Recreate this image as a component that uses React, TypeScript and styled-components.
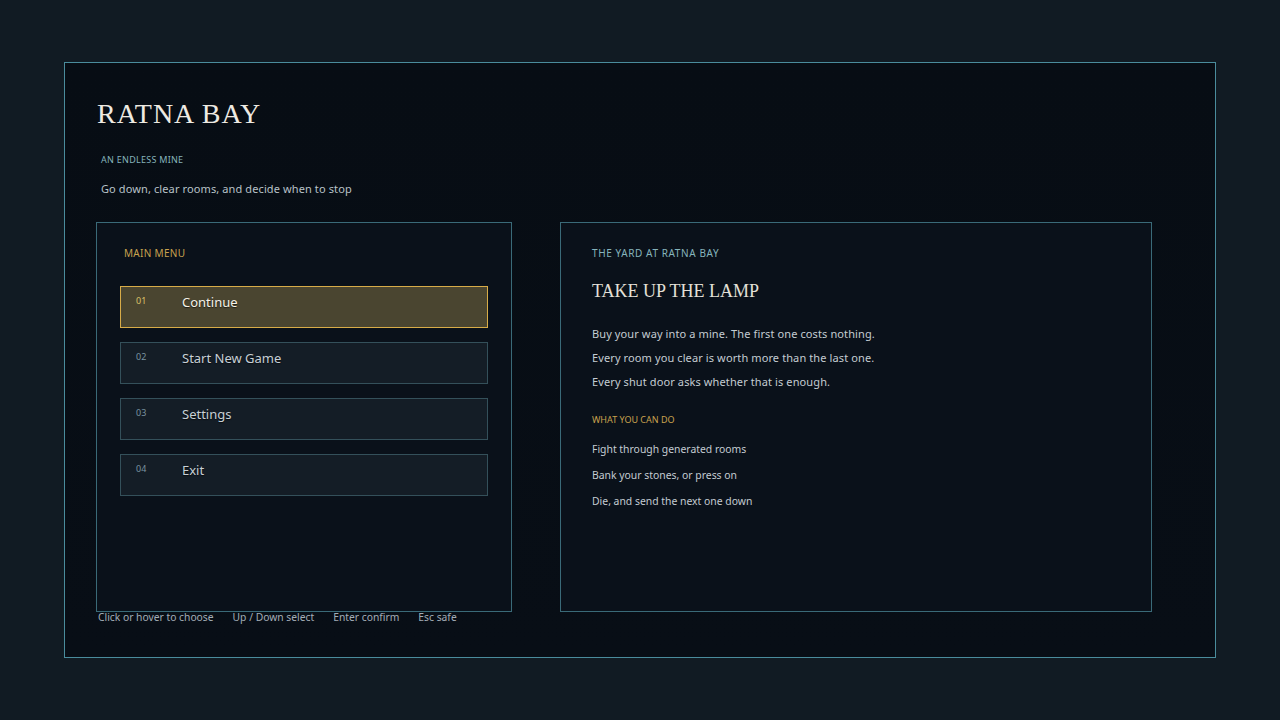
import React from 'react'
import styled, { createGlobalStyle } from 'styled-components'

const GlobalStyle = createGlobalStyle`
  html, body {
    margin: 0;
    padding: 0;
    background: #111b23;
  }
  body {
    font-family: 'Noto Sans', 'Open Sans', sans-serif;
    color: #c4ccd2;
  }
`

const gold = '#c9a24e'
const teal = '#86b4bc'

const Screen = styled.div`
  width: 1280px;
  height: 720px;
  padding: 62px 64px;
  box-sizing: border-box;
`

const Frame = styled.main`
  height: 100%;
  box-sizing: border-box;
  border: 1px solid #4a8c9c;
  background: linear-gradient(180deg, #070d14 0%, #080e16 100%);
  padding: 33px 31px 0;
`

const Header = styled.header`
  display: flex;
  flex-direction: column;
  margin-bottom: 25px;
`

const Title = styled.h1`
  margin: 0 0 0 1px;
  font-family: 'Liberation Serif', 'DejaVu Serif', serif;
  font-weight: 400;
  font-size: 28px;
  line-height: 36px;
  letter-spacing: 1px;
  color: #eeeae2;
`

const Kicker = styled.span<{ color?: string; size?: number; indent?: number }>`
  display: block;
  margin-left: ${({ indent }) => indent ?? 0}px;
  font-size: ${({ size }) => size ?? 10}px;
  line-height: 14px;
  letter-spacing: 0.03em;
  color: ${({ color }) => color ?? teal};
  text-transform: uppercase;
`

const Tagline = styled.p`
  margin: 14px 0 0 5px;
  font-size: 11px;
  line-height: 16px;
  letter-spacing: 0.01em;
  color: #b8c2c8;
`

const Columns = styled.div`
  display: grid;
  grid-template-columns: 416px 592px;
  column-gap: 48px;
  align-items: start;
`

const Panel = styled.section<{ pad?: string }>`
  height: 390px;
  box-sizing: border-box;
  border: 1px solid #3a6a78;
  background: #0a111a;
  padding: ${({ pad }) => pad ?? '23px 31px'};
`

const MenuList = styled.ul`
  list-style: none;
  margin: 26px 0 0;
  padding: 0;
  display: flex;
  flex-direction: column;
  gap: 14px;
`

const MenuItem = styled.li<{ active?: boolean }>`
  height: 42px;
  box-sizing: border-box;
  display: flex;
  align-items: flex-start;
  padding: 6px 15px 0;
  border: 1px solid ${({ active }) => (active ? '#d8ac48' : '#34505a')};
  background: ${({ active }) => (active ? '#4a4530' : '#141d26')};
  cursor: pointer;
`

const ItemNumber = styled.span<{ active?: boolean }>`
  width: 46px;
  flex-shrink: 0;
  font-size: 9px;
  line-height: 16px;
  color: ${({ active }) => (active ? '#dcc068' : '#7a93a0')};
`

const ItemLabel = styled.span<{ active?: boolean }>`
  font-size: 13px;
  line-height: 18px;
  color: ${({ active }) => (active ? '#f6f2e8' : '#c8d0d6')};
  text-shadow: 0 1px 1px rgba(0, 0, 0, 0.6);
`

const Hints = styled.div`
  display: flex;
  gap: 19px;
  padding-left: 2px;
  font-size: 10.3px;
  line-height: 10px;
  color: #a3adb6;
`

const SectionTitle = styled.h2`
  margin: 19px 0 0;
  font-family: 'Liberation Serif', 'DejaVu Serif', serif;
  font-weight: 400;
  font-size: 18px;
  line-height: 24px;
  color: #e4e0d8;
`

const Body = styled.div`
  margin-top: 19px;
  font-size: 11px;
  line-height: 24px;
  letter-spacing: 0.01em;
  color: #c4ccd2;
`

const Line = styled.p`
  margin: 0;
`

const Features = styled.div`
  margin-top: 10px;
`

const Feature = styled.p`
  margin: 0;
  font-size: 10.4px;
  line-height: 26px;
  color: #c4ccd2;
`

const menu = ['Continue', 'Start New Game', 'Settings', 'Exit']

const hints = ['Click or hover to choose', 'Up / Down select', 'Enter confirm', 'Esc safe']

export default function App() {
  return (
    <Screen>
      <GlobalStyle />
      <Frame>
        <Header>
          <Title>RATNA BAY</Title>
          <Kicker size={9} indent={5} style={{ marginTop: 21 }}>
            An endless mine
          </Kicker>
          <Tagline>Go down, clear rooms, and decide when to stop</Tagline>
        </Header>

        <Columns>
          <div>
            <Panel pad="23px 23px">
              <Kicker color={gold} indent={4}>
                Main menu
              </Kicker>
              <MenuList>
                {menu.map((label, i) => (
                  <MenuItem key={label} active={i === 0}>
                    <ItemNumber active={i === 0}>{`0${i + 1}`}</ItemNumber>
                    <ItemLabel active={i === 0}>{label}</ItemLabel>
                  </MenuItem>
                ))}
              </MenuList>
            </Panel>
            <Hints>
              {hints.map((h) => (
                <span key={h}>{h}</span>
              ))}
            </Hints>
          </div>

          <Panel>
            <Kicker style={{ letterSpacing: '0.06em' }}>The yard at Ratna Bay</Kicker>
            <SectionTitle>TAKE UP THE LAMP</SectionTitle>
            <Body>
              <Line>Buy your way into a mine. The first one costs nothing.</Line>
              <Line>Every room you clear is worth more than the last one.</Line>
              <Line>Every shut door asks whether that is enough.</Line>
            </Body>
            <Kicker
              color={gold}
              size={9}
              style={{ marginTop: 20, lineHeight: '12px', letterSpacing: 0 }}
            >
              What you can do
            </Kicker>
            <Features>
              <Feature>Fight through generated rooms</Feature>
              <Feature>Bank your stones, or press on</Feature>
              <Feature>Die, and send the next one down</Feature>
            </Features>
          </Panel>
        </Columns>
      </Frame>
    </Screen>
  )
}
